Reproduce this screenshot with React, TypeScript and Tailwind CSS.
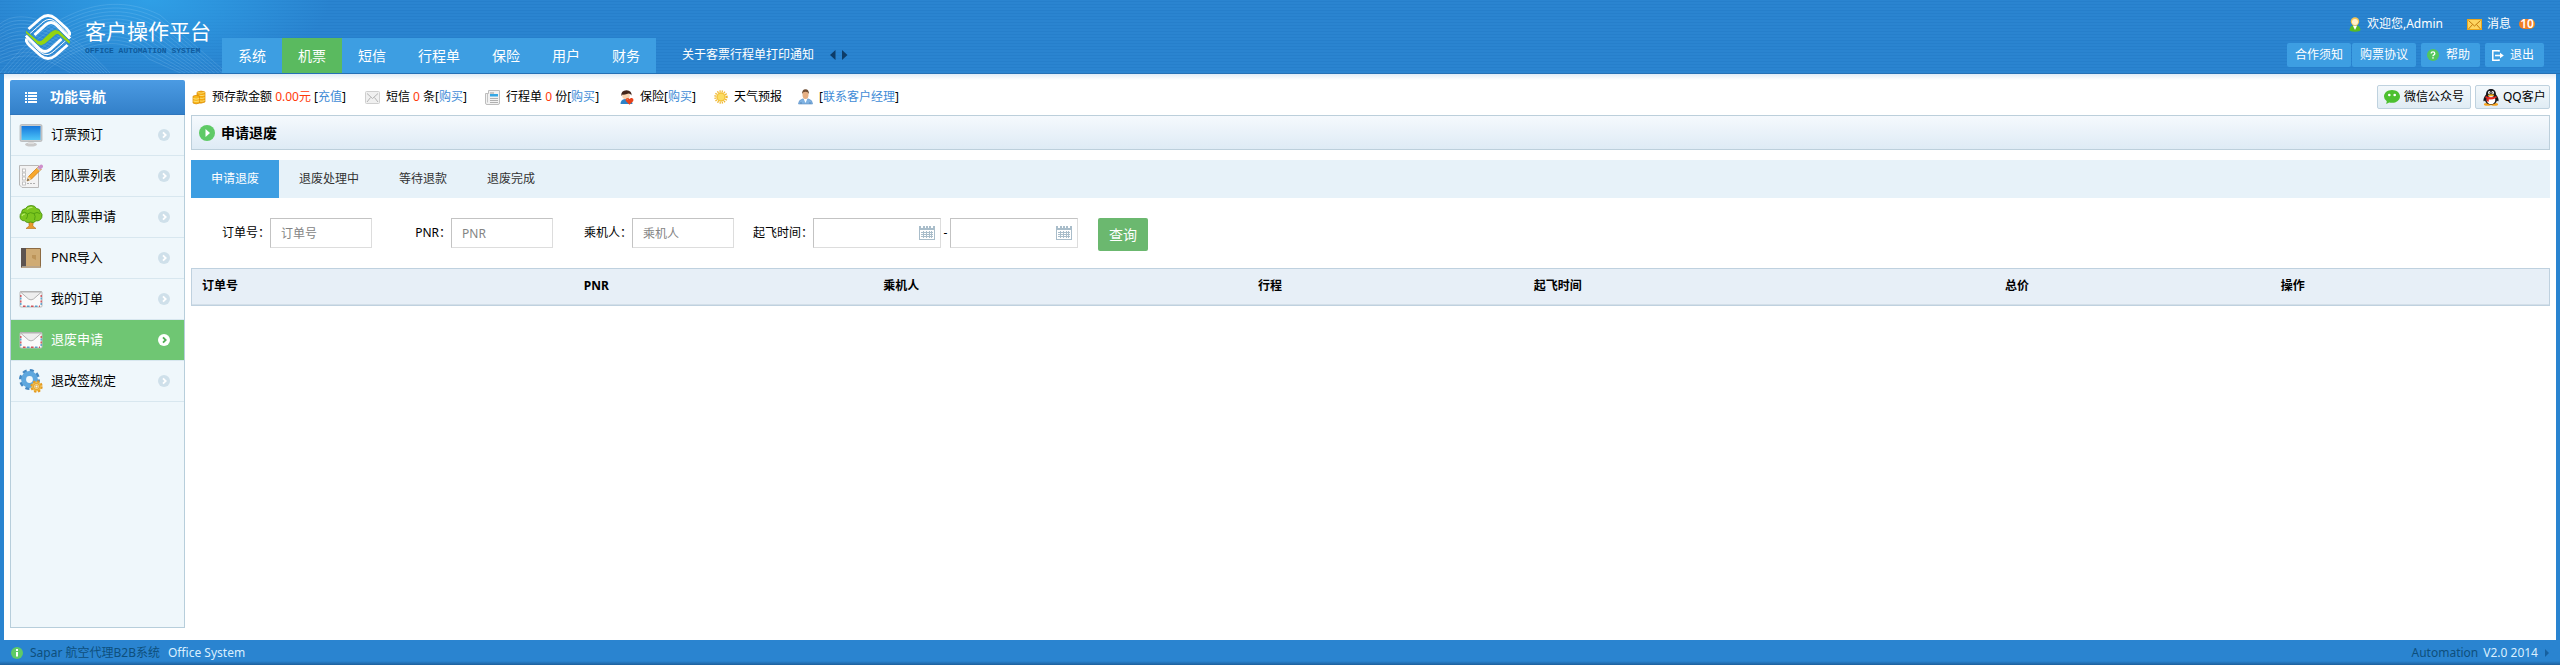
import React from "react";

type IconProps = { className?: string };

const CoinsIcon = ({ className }: IconProps) => (
  <svg className={className} viewBox="0 0 14 15">
    <path d="M5 2.2Q9 0 13 2V12Q9.500 14 5 12.500Z" fill="#f5a90c" stroke="#d98a06" strokeWidth=".7" />
    <path d="M1 6.200Q4 4.500 7.500 6.200V13Q4 14.800 1 13Z" fill="#f9b81c" stroke="#d98a06" strokeWidth=".7" />
    <path d="M5.500 2.600Q9 3.800 12.700 2.400M7.500 5.300Q10 6 12.700 5M8 8.200Q10 8.800 12.700 7.800M8 11Q10 11.600 12.700 10.600M1.300 8.500Q4 9.800 7.300 8.500M1.300 11Q4 12.200 7.300 11" fill="none" stroke="#fbe27c" strokeWidth=".9" />
  </svg>
);

const SmallMailIcon = ({ className }: IconProps) => (
  <svg className={className} viewBox="0 0 15 13">
    <rect x=".5" y=".5" width="14" height="12" rx="1" fill="#f0f0f0" stroke="#cfcfcf" />
    <path d="M2 2.500L7.500 7.500L13 2.500M2 11L5.500 6.500M13 11L9.500 6.500" fill="none" stroke="#b4b4b4" />
  </svg>
);

const NewsIcon = ({ className }: IconProps) => (
  <svg className={className} viewBox="0 0 15 15">
    <path d="M3.500 .5H14.500V13Q14.500 14.500 13 14.500H2Q.5 14.500 .5 13V3.500H3.500Z" fill="#f2f2f2" stroke="#bdbdbd" />
    <path d="M2.500 4V12.500" stroke="#c4c4c4" />
    <path d="M5 3H9" stroke="#9c9c9c" />
    <rect x="5" y="4" width="8" height="2.500" fill="#35a7e4" />
    <path d="M5 8.500H13M5 10.500H13M5 12.500H13" stroke="#a8a8a8" strokeWidth=".9" />
  </svg>
);

const InsuranceIcon = ({ className }: IconProps) => (
  <svg className={className} viewBox="0 0 14 15">
    <path d="M.5 14Q.5 9.500 5 9H9Q12 9.500 12.500 14Z" fill="#2c82c9" />
    <circle cx="6" cy="5.500" r="3.800" fill="#f8d3b0" />
    <path d="M1.300 6Q.8 .5 6.500 .3Q12 .5 11.500 5.500Q10.500 3.500 8.500 3.500Q5 5 2.600 4.500Z" fill="#42261b" />
    <path d="M9.500 14.800L5.800 11Q5 8.500 7.300 7.900Q8.800 7.800 9.600 9Q10.500 7.700 12 8Q14 8.700 13.300 11Z" fill="#e8421a" />
    <path d="M7 9.700Q7.200 9 8 9" stroke="#ff9b76" strokeWidth=".8" fill="none" />
  </svg>
);

const SunIcon = ({ className }: IconProps) => (
  <svg className={className} viewBox="0 0 14 14">
    <circle cx="7" cy="7" r="5.700" fill="none" stroke="#efb52e" strokeWidth="2" strokeDasharray="1.200 1.040" />
    <circle cx="7" cy="7" r="4.700" fill="#f4c33a" />
    <circle cx="7" cy="7" r="3.300" fill="#fbdc62" />
  </svg>
);

const ManagerIcon = ({ className }: IconProps) => (
  <svg className={className} viewBox="0 0 15 16">
    <path d="M.5 15Q.5 11 4.500 10H10.500Q14.500 11 14.500 15Z" fill="#7fb2e2" stroke="#5a8fc4" strokeWidth=".6" />
    <path d="M5.500 9.500L7.500 14L9.500 9.500Z" fill="#fff" />
    <ellipse cx="7.500" cy="5.800" rx="3" ry="4.200" fill="#e6b084" />
    <path d="M4 5Q4 .3 7.500 .3Q11 .3 11 5Q10 2.700 7.500 2.800Q5 2.700 4 5Z" fill="#6e4c32" />
    <path d="M3 15V13M12 15V13" stroke="#4a7cae" strokeWidth=".7" />
  </svg>
);

const UserIcon = ({ className }: IconProps) => (
  <svg className={className} viewBox="0 0 12 15">
    <path d="M.5 13Q1 8.800 4 8.500H8Q11 8.800 11.500 13Q11 14.700 6 14.700Q1 14.700 .5 13Z" fill="#58bb24" />
    <path d="M3.800 8.500H8.200L6 13Z" fill="#fff" />
    <circle cx="6" cy="4.500" r="4.200" fill="#f6c552" />
    <circle cx="6" cy="5" r="3" fill="#fff0cf" />
  </svg>
);

const GoldMailIcon = ({ className }: IconProps) => (
  <svg className={className} viewBox="0 0 15 11">
    <rect x=".5" y=".5" width="14" height="10" fill="#fdd560" stroke="#e9a51d" />
    <path d="M1.500 1.500L7.500 7L13.500 1.500M1.500 10L5.500 5.500M13.500 10L9.500 5.500" fill="none" stroke="#c17a0c" />
  </svg>
);

const HelpIcon = ({ className }: IconProps) => (
  <svg className={className} viewBox="0 0 12 12">
    <circle cx="6" cy="6" r="6" fill="#53c75c" />
    <path d="M4.200 4.500Q4.200 2.900 6 2.900Q7.800 2.900 7.800 4.400Q7.800 5.300 6.800 5.900Q6 6.300 6 7.300" fill="none" stroke="#fff" strokeWidth="1.300" />
    <rect x="5.300" y="8.200" width="1.400" height="1.400" fill="#fff" />
  </svg>
);

const ExitIcon = ({ className }: IconProps) => (
  <svg className={className} viewBox="0 0 12 11">
    <path d="M7 1.800V.8H.8V10.200H7V9.200" fill="none" stroke="#fff" strokeWidth="1.500" />
    <path d="M3 5.500H9" stroke="#fff" strokeWidth="1.600" />
    <path d="M8 2.700L11.800 5.500L8 8.300Z" fill="#fff" />
  </svg>
);

const WechatIcon = ({ className }: IconProps) => (
  <svg className={className} viewBox="0 0 16 14">
    <path d="M8 0C12.500 0 16 2.800 16 6.400S12.500 12.800 8 12.800Q6.500 12.800 5.200 12.400L2.200 14L2.800 11.300Q0 9.300 0 6.400C0 2.800 3.500 0 8 0Z" fill="#4cc02f" />
    <circle cx="5.300" cy="5" r="1.300" fill="#fff" />
    <circle cx="10.700" cy="5" r="1.300" fill="#fff" />
  </svg>
);

const QQIcon = ({ className }: IconProps) => (
  <svg className={className} viewBox="0 0 16 17">
    <ellipse cx="4.500" cy="15.400" rx="3.600" ry="1.400" fill="#f7a21b" />
    <ellipse cx="11.500" cy="15.400" rx="3.600" ry="1.400" fill="#f7a21b" />
    <path d="M8 0C11.500 0 13 2.500 13 5.500Q16 9 15.500 12Q14.800 12.700 14 11.500Q13 15.500 8 15.500T2 11.500Q1.200 12.700 .5 12Q0 9 3 5.500C3 2.500 4.500 0 8 0Z" fill="#17171b" />
    <ellipse cx="8" cy="11" rx="4.300" ry="4.100" fill="#fff" />
    <ellipse cx="6.300" cy="3.600" rx="1.300" ry="1.700" fill="#fff" />
    <ellipse cx="9.700" cy="3.600" rx="1.300" ry="1.700" fill="#fff" />
    <circle cx="6.800" cy="3.800" r=".6" />
    <circle cx="9.200" cy="3.800" r=".6" />
    <ellipse cx="8" cy="6.300" rx="3.200" ry="1" fill="#f9b21d" />
    <path d="M2.800 7Q8 9.500 13.200 7L13.700 8.700Q8 11.300 5.800 10.300V12.700L3.600 12.200V9.500L2.300 8.700Z" fill="#e3261d" />
  </svg>
);

const MonitorIcon = ({ className }: IconProps) => (
  <svg className={className} viewBox="0 0 24 24">
    <defs>
      <linearGradient id="screen" x1="0" y1="0" x2="0" y2="1">
        <stop offset="0" stopColor="#1778dc" />
        <stop offset="1" stopColor="#4cc5f8" />
      </linearGradient>
    </defs>
    <ellipse cx="12" cy="21.500" rx="6" ry="2" fill="#c9c9c9" />
    <path d="M9.500 18H14.500L15 21H9Z" fill="#dedede" />
    <rect x="1" y="1.500" width="22" height="17" rx="1.500" fill="#c9cacb" stroke="#aeb0b2" strokeWidth=".7" />
    <rect x="2.500" y="3" width="19" height="14" fill="url(#screen)" />
  </svg>
);

const NoteIcon = ({ className }: IconProps) => (
  <svg className={className} viewBox="0 0 24 24">
    <path d="M.5 1.500H19.500V23.500H3L.5 21Z" fill="#f3f3f3" stroke="#b9b9b9" />
    <g fill="#fff" stroke="#bdbdbd" strokeWidth=".9">
      <rect x="3.500" y="5" width="3" height="3" />
      <rect x="3.500" y="9" width="3" height="3" />
      <rect x="3.500" y="13" width="3" height="3" />
      <rect x="3.500" y="18" width="3" height="3" />
    </g>
    <path d="M8 19.500H17" stroke="#b0b0b0" strokeDasharray="2 1" />
    <path d="M8 17L9.500 12.500L19.500 2.500L22.300 5.200L12.300 15.200Z" fill="#f8a72c" stroke="#c97b12" strokeWidth=".7" />
    <path d="M8 17L9.500 12.500L12.300 15.200Z" fill="#eed4a5" />
    <path d="M8 17L8.800 14.700L10.200 16.100Z" fill="#444" />
    <path d="M18.500 3.500L21 1Q22.500 0 23.600 1.200Q24.500 2.500 23.600 3.600L21.200 6Z" fill="#cf8fcb" />
    <path d="M17.700 4.300L20.500 7L21.500 6L18.700 3.300Z" fill="#c2c6cb" />
  </svg>
);

const TreeIcon = ({ className }: IconProps) => (
  <svg className={className} viewBox="0 0 24 24">
    <path d="M9.500 15H14.500L13.800 21L17 23.500H7L10.200 21Z" fill="#e89a2c" stroke="#b36f14" strokeWidth=".6" />
    <path d="M12 .5Q16 .3 17.500 3.500Q21 3.500 21.300 7Q24 9 22.800 12.500Q21 16.500 17 15.800Q14.500 18.800 11.500 17Q7.500 18.500 5.800 15.800Q1.500 16 1 12Q.8 9 2.500 7.800Q2.500 4 6.500 3.500Q8 .6 12 .5Z" fill="#7bc51e" stroke="#438b0c" strokeWidth=".8" />
    <path d="M3 8Q6 6 8.500 9Q11 6.500 15 8.500Q18 6.500 21 8.500M8.500 9Q9 12 7 14M15 8.500Q17 11 15.500 15" fill="none" stroke="#4e9c10" strokeWidth=".9" />
    <path d="M8 4.500Q10 1.800 13.500 2.500M3 11Q3.500 9 6 9" stroke="#b7e96b" fill="none" strokeWidth="1.200" />
  </svg>
);

const BookIcon = ({ className }: IconProps) => (
  <svg className={className} viewBox="0 0 24 24">
    <rect x="2" y="2" width="20" height="20" rx="1" fill="#8c6b43" />
    <rect x="2" y="2" width="5" height="19" fill="#5d5450" />
    <rect x="7" y="3" width="14" height="17" fill="#cfab74" />
    <path d="M3 21H21.500" stroke="#e9e0cf" />
    <path d="M13 9H17V14L13 12Z" fill="#bd9459" />
  </svg>
);

const LetterIcon = ({ className }: IconProps) => (
  <svg className={className} viewBox="0 0 24 24">
    <rect x="1" y="4.500" width="22" height="15.500" rx="1" fill="#fafafa" stroke="#b9b9b9" />
    <path d="M1.800 8V18" stroke="#d0535b" strokeWidth="1.400" strokeDasharray="2 3.500" />
    <path d="M22.200 8V18" stroke="#d0535b" strokeWidth="1.400" strokeDasharray="2 3.500" />
    <path d="M1.800 10.500V18M22.200 10.500V18" stroke="#5a9fc9" strokeWidth="1.400" strokeDasharray="2 3.500" />
    <path d="M4 19.300H21" stroke="#d0535b" strokeWidth="1.400" strokeDasharray="2.500 5.500" />
    <path d="M8 19.300H21" stroke="#5a9fc9" strokeWidth="1.400" strokeDasharray="2.500 5.500" />
    <path d="M1.500 5L9.500 12Q12 13.800 14.500 12L22.500 5Z" fill="#eee" stroke="#aaa" strokeWidth=".9" />
  </svg>
);

const GearsIcon = ({ className }: IconProps) => (
  <svg className={className} viewBox="0 0 24 24">
    <circle cx="10.500" cy="10.500" r="9" fill="none" stroke="#4588c2" strokeWidth="3" strokeDasharray="4 3.070" />
    <circle cx="10.500" cy="10.500" r="5.900" fill="none" stroke="#5ea7de" strokeWidth="5" />
    <circle cx="17.500" cy="17.500" r="5" fill="#f5c04a" />
    <circle cx="17.500" cy="17.500" r="5.200" fill="none" stroke="#e39b23" strokeWidth="2" strokeDasharray="2.300 1.780" />
    <circle cx="17.500" cy="17.500" r="3" fill="#fce08a" stroke="#d68a1b" strokeWidth=".8" />
    <circle cx="17.500" cy="17.500" r="1.300" fill="#eff7fb" stroke="#d68a1b" strokeWidth=".6" />
  </svg>
);

const CalendarIcon = ({ className }: IconProps) => (
  <svg className={className} viewBox="0 0 16 14" shapeRendering="crispEdges">
    <path d="M0 0H2V2H4V0H6V2H7V0H9V2H10V0H12V2H14V0H16V14H0Z" fill="#a9bdca" />
    <rect x="1" y="4" width="14" height="9" fill="#fff" />
    <path d="M2 6.500H14M2 8.500H14M2 10.500H14M4.500 5V12M7.500 5V12M10.500 5V12M12.500 5V12" stroke="#a9bdca" />
  </svg>
);

const ListIcon = ({ className }: IconProps) => (
  <svg className={className} viewBox="0 0 12 11" fill="#fff">
    <path d="M0 0H2V2H0ZM3 0H12V2H3ZM0 3H2V5H0ZM3 3H12V5H3ZM0 6H2V8H0ZM3 6H12V8H3ZM0 9H2V11H0ZM3 9H12V11H3Z" />
  </svg>
);

const ChevronDot = ({ active }: { active?: boolean }) => (
  <svg className="size-3" viewBox="0 0 12 12">
    <circle cx="6" cy="6" r="6" fill={active ? "#fff" : "#cfe0ea"} />
    <path d="M5 3.300L7.700 6L5 8.700" fill="none" stroke={active ? "#4fae55" : "#fff"} strokeWidth="1.800" />
  </svg>
);

const Logo = ({ className }: IconProps) => (
  <svg className={className} viewBox="0 0 46 46" fill="none">
    <g stroke="#fff">
      <path d="M3.500 15L15.500 4.500Q23 -1.500 30.500 4.500L41 14Q45 18 45.300 21.500" strokeWidth="2.800" />
      <path d="M9.500 21L21 10.500Q26 6.500 31 10.500L45 24.500" strokeWidth="3" />
      <path d="M4.500 20L18 8Q24 3 30 7.500L39 15.500Q43.500 19.500 45.300 24" strokeWidth="1" />
    </g>
    <g stroke="#fff" transform="rotate(180 23 23)">
      <path d="M3.500 15L15.500 4.500Q23 -1.500 30.500 4.500L41 14Q45 18 45.300 21.500" strokeWidth="2.800" />
      <path d="M9.500 21L21 10.500Q26 6.500 31 10.500L45 24.500" strokeWidth="3" />
      <path d="M4.500 20L18 8Q24 3 30 7.500L39 15.500Q43.500 19.500 45.300 24" strokeWidth="1" />
    </g>
    <path
      d="M.5 16L13 26.500Q15 27.500 17 26L26 17.500Q30 14 34 16.500L45.500 27.500L44.500 30.500L34 21Q32 19.500 30 21.500L20 30Q16 33 12.500 30.500L.5 19Z"
      fill="#93d410"
      stroke="#2b87d3"
      strokeWidth=".8"
    />
  </svg>
);

const waveOffsets = [0, 1, 2, 3, 4, 5, 6, 7, 8, 9, 10, 11];

const HeaderWaves = ({ className }: IconProps) => (
  <svg className={className} viewBox="0 0 230 74" fill="none" stroke="#bfe3ff" strokeOpacity=".2" strokeWidth=".8">
    {waveOffsets.map((i) => (
      <g key={i}>
        <path d={`M0 ${25 + i * 3.5}C${20 + i} ${8 + i * 4} ${60 - i * 2} ${20 + i * 3} ${110 - i * 2} ${74 + i}`} />
        <path d={`M${i * 4} 74C${35 + i * 3} ${30 + i * 2} ${95 + i * 2} ${-16 + i * 4} ${160 - i} ${16 + i * 4}T${229 - i * 4} 76`} />
      </g>
    ))}
  </svg>
);

const navItems = ["系统", "机票", "短信", "行程单", "保险", "用户", "财务"];

const sideItems = [
  { label: "订票预订", Icon: MonitorIcon },
  { label: "团队票列表", Icon: NoteIcon },
  { label: "团队票申请", Icon: TreeIcon },
  { label: "PNR导入", Icon: BookIcon },
  { label: "我的订单", Icon: LetterIcon },
  { label: "退废申请", Icon: LetterIcon, active: true },
  { label: "退改签规定", Icon: GearsIcon },
];

const tabs = ["申请退废", "退废处理中", "等待退款", "退废完成"];

const columns = [
  { label: "订单号", width: "w-[16.2%]" },
  { label: "PNR", width: "w-[12.7%]" },
  { label: "乘机人", width: "w-[15.9%]" },
  { label: "行程", width: "w-[11.7%]" },
  { label: "起飞时间", width: "w-[20%]" },
  { label: "总价", width: "w-[11.7%]" },
  { label: "操作", width: "w-[11.8%]" },
];

const inputBorder = "border border-[#dddddd] border-t-[#c3c3c3] border-l-[#c3c3c3] bg-white";

const Header = () => (
  <header className="relative flex items-end border-b border-[#2470b5] bg-[#2a84d0] bg-[radial-gradient(ellipse_180px_76px_at_150px_0px,#2f9fe6,transparent),repeating-linear-gradient(0deg,#2a84d0_0px,#2a84d0_2px,#267fcb_2px,#267fcb_3px)] text-white">
    <HeaderWaves className="pointer-events-none absolute bottom-0 left-0 h-[74px] w-[230px]" />
    <a href="#home" className="relative flex h-[73px] w-[222px] shrink-0 items-center pl-[25px]">
      <Logo className="size-[46px]" />
      <span className="flex flex-col pl-3.5">
        <span className="text-[21px] leading-7 whitespace-nowrap">客户操作平台</span>
        <span className="font-['Liberation_Mono',monospace] text-[8px] leading-3 font-bold whitespace-nowrap text-[#0f5b9d]">OFFICE AUTOMATION SYSTEM</span>
      </span>
    </a>
    <nav className="relative flex shrink-0 bg-[#3d9ee2] text-sm">
      {navItems.map((item) => (
        <a
          key={item}
          href="#nav"
          className={item === "机票" ? "flex h-[35px] items-center bg-[#5aba5f] px-4" : "flex h-[35px] items-center px-4"}
        >
          {item}
        </a>
      ))}
    </nav>
    <div className="flex h-9 shrink-0 items-center pl-[26px]">
      <a href="#notice">关于客票行程单打印通知</a>
      <button type="button" aria-label="上一条" className="ml-4">
        <svg className="h-2.5 w-1.5" viewBox="0 0 6 10"><path d="M5.500 0V10L0 5Z" fill="#0d3c68" /></svg>
      </button>
      <button type="button" aria-label="下一条" className="ml-1.5">
        <svg className="h-2.5 w-1.5" viewBox="0 0 6 10"><path d="M0 0V10L5.500 5Z" fill="#0d3c68" /></svg>
      </button>
    </div>
    <div className="ml-auto flex shrink-0 flex-col items-end pr-4 pb-1.5">
      <div className="flex h-[38px] items-center pr-[9px]">
        <UserIcon className="mr-1.5 h-[15px] w-3" />
        <span>欢迎您,Admin</span>
        <a href="#messages" className="ml-6 flex items-center">
          <GoldMailIcon className="mr-[5px] h-[11px] w-[15px]" />
          消息
          <span className="ml-2 flex h-2.5 w-4 items-center justify-center rounded-full bg-[#f08022] font-semibold">10</span>
        </a>
      </div>
      <div className="flex h-6">
        <a href="#terms" className="mr-px flex items-center rounded-xs bg-[#3d9ee2] px-2">合作须知</a>
        <a href="#agreement" className="mr-[5px] flex items-center rounded-xs bg-[#3d9ee2] px-2">购票协议</a>
        <a href="#help" className="mr-[5px] flex w-[59px] items-center rounded-xs bg-[#3d9ee2] pl-1.5">
          <HelpIcon className="mr-[7px] size-3" />
          帮助
        </a>
        <a href="#logout" className="flex w-[59px] items-center rounded-xs bg-[#3d9ee2] pl-[7px]">
          <ExitIcon className="mr-1.5 h-[11px] w-3" />
          退出
        </a>
      </div>
    </div>
  </header>
);

const Sidebar = () => (
  <aside className="flex w-[175px] shrink-0 flex-col">
    <h2 className="flex h-[35px] items-center rounded-t-xs border-b border-[#2f76bd] bg-linear-to-b from-[#4b9be3] to-[#3380c9] pl-[15px] text-sm font-bold text-white">
      <ListIcon className="mr-[13px] h-[11px] w-3" />
      功能导航
    </h2>
    <ul className="flex-1 border border-t-0 border-[#b7cedb] bg-[#eff7fb] text-[13px]">
      {sideItems.map(({ label, Icon, active }) => (
        <li key={label} className="border-b border-[#d8e7ef]">
          <a
            href="#menu"
            className={active ? "flex h-10 items-center bg-[#6fc673] pr-3.5 pl-2 text-white" : "flex h-10 items-center pr-3.5 pl-2"}
          >
            <Icon className="mr-2 size-6" />
            <span className="flex-1">{label}</span>
            <ChevronDot active={active} />
          </a>
        </li>
      ))}
    </ul>
  </aside>
);

const Link = ({ children }: { children: React.ReactNode }) => (
  <>
    [<a href="#link" className="text-[#418bd6]">{children}</a>]
  </>
);

const InfoBar = () => (
  <div className="flex items-center justify-between pb-1.5">
    <div className="flex items-center whitespace-nowrap">
      <CoinsIcon className="mr-1.5 ml-px h-[15px] w-3.5" />
      <span>预存款金额 <span className="text-[#ff3b0a]">0.00元</span> <Link>充值</Link></span>
      <SmallMailIcon className="mr-1.5 ml-[19px] h-[13px] w-[15px]" />
      <span>短信 <span className="text-[#ff3b0a]">0</span> 条<Link>购买</Link></span>
      <NewsIcon className="mr-1.5 ml-[18px] size-[15px]" />
      <span>行程单 <span className="text-[#ff3b0a]">0</span> 份<Link>购买</Link></span>
      <InsuranceIcon className="mr-1.5 ml-[21px] h-[15px] w-3.5" />
      <span>保险<Link>购买</Link></span>
      <SunIcon className="mr-1.5 ml-[18px] size-3.5" />
      <span>天气预报</span>
      <ManagerIcon className="mr-1.5 ml-4 h-4 w-[15px]" />
      <span><Link>联系客户经理</Link></span>
    </div>
    <div className="flex gap-1">
      <button type="button" className="flex h-6 w-[94px] items-center gap-1 rounded-xs border border-[#bfd2df] bg-linear-to-b from-[#f3f8fb] to-[#e0ecf4] pl-1.5 whitespace-nowrap">
        <WechatIcon className="h-3.5 w-4" />
        微信公众号
      </button>
      <button type="button" className="flex h-6 w-[75px] items-center gap-1 rounded-xs border border-[#bfd2df] bg-linear-to-b from-[#f3f8fb] to-[#e0ecf4] pl-[7px] whitespace-nowrap">
        <QQIcon className="h-[17px] w-4" />
        QQ客户
      </button>
    </div>
  </div>
);

const TextField = ({ id, label, className }: { id: string; label: string; className: string }) => (
  <div className={className}>
    <label htmlFor={id}>{label}：</label>
    <input id={id} type="text" placeholder={label} className={`h-[30px] w-[102px] px-2.5 placeholder:text-[#848484] ${inputBorder}`} />
  </div>
);

const DateField = ({ id, label }: { id: string; label: string }) => (
  <div className={`flex h-[30px] w-32 items-center pr-[5px] ${inputBorder}`}>
    <input id={id} type="text" aria-label={label} className="h-full min-w-0 flex-1 pl-2.5 outline-none" />
    <CalendarIcon className="h-3.5 w-4" />
  </div>
);

const SearchForm = () => (
  <form className="flex items-start pt-5 pb-[17px] pl-[31px] whitespace-nowrap" onSubmit={(e) => e.preventDefault()}>
    <TextField id="order" label="订单号" className="flex items-center" />
    <TextField id="pnr" label="PNR" className="flex w-[181px] items-center justify-end" />
    <TextField id="passenger" label="乘机人" className="flex w-[181px] items-center justify-end" />
    <div className="flex items-center pl-[19px]">
      <label htmlFor="from">起飞时间：</label>
      <DateField id="from" label="起飞时间开始" />
      <span className="w-[9px] text-center">-</span>
      <DateField id="to" label="起飞时间结束" />
    </div>
    <button type="submit" className="ml-5 h-[33px] w-[50px] rounded-xs bg-[#6bb86f] text-sm text-white">查询</button>
  </form>
);

export default function App() {
  return (
    <div className="flex min-h-screen flex-col bg-[#2a84d0] font-['Noto_Sans','Noto_Sans_CJK_SC',sans-serif] text-xs text-black">
      <Header />
      <div className="mx-1 flex flex-1 gap-1.5 bg-white bg-[linear-gradient(to_bottom,#dfebf6,#ffffff_6px)] px-1.5 pt-1.5 pb-3">
        <Sidebar />
        <main className="min-w-0 flex-1 pt-[5px]">
          <InfoBar />
          <h1 className="flex h-[35px] items-center gap-1.5 border border-[#bccfdb] bg-linear-to-b from-[#f5f9fd] to-[#deebf5] pl-[7px] text-sm font-bold">
            <svg className="size-4" viewBox="0 0 16 16">
              <circle cx="8" cy="8" r="8" fill="#5fca66" />
              <path d="M6.500 4V12L11 8Z" fill="#fff" />
            </svg>
            申请退废
          </h1>
          <div role="tablist" className="mt-2.5 flex bg-[#e7f2f9]">
            {tabs.map((tab, i) => (
              <button
                key={tab}
                type="button"
                role="tab"
                aria-selected={i === 0}
                className={i === 0 ? "h-[38px] bg-[#3d9ee2] px-5 text-white" : "h-[38px] px-5 text-[#333333]"}
              >
                {tab}
              </button>
            ))}
          </div>
          <SearchForm />
          <div className="border border-[#bfd1df] bg-[#e7eff7]">
            <table className="w-full table-fixed">
              <thead>
                <tr className="h-[35px] border-b border-[#d3dfe9]">
                  {columns.map((c) => (
                    <th key={c.label} scope="col" className={`px-2.5 text-left font-bold ${c.width}`}>
                      {c.label}
                    </th>
                  ))}
                </tr>
              </thead>
            </table>
          </div>
        </main>
      </div>
      <footer className="flex h-[25px] items-center justify-between bg-[linear-gradient(to_top,#1d5f9c,#2a84d0_4px)] px-[11px] text-[#0e4f7c]">
        <p className="flex items-center">
          <svg className="mr-[7px] size-3" viewBox="0 0 12 12">
            <circle cx="6" cy="6" r="6" fill="#5fca66" />
            <path d="M5 2H7V4H5ZM5 5H7V9.500H5Z" fill="#fff" />
          </svg>
          Sapar 航空代理B2B系统
          <span className="ml-2 text-[#d9efff]">Office System</span>
        </p>
        <p className="flex items-center">
          Automation
          <span className="ml-[5px] text-[#d9efff]">V2.0 2014</span>
          <svg className="ml-[7px] h-2 w-1" viewBox="0 0 4 8"><path d="M0 0V8L4 4Z" fill="#16609f" /></svg>
        </p>
      </footer>
    </div>
  );
}
